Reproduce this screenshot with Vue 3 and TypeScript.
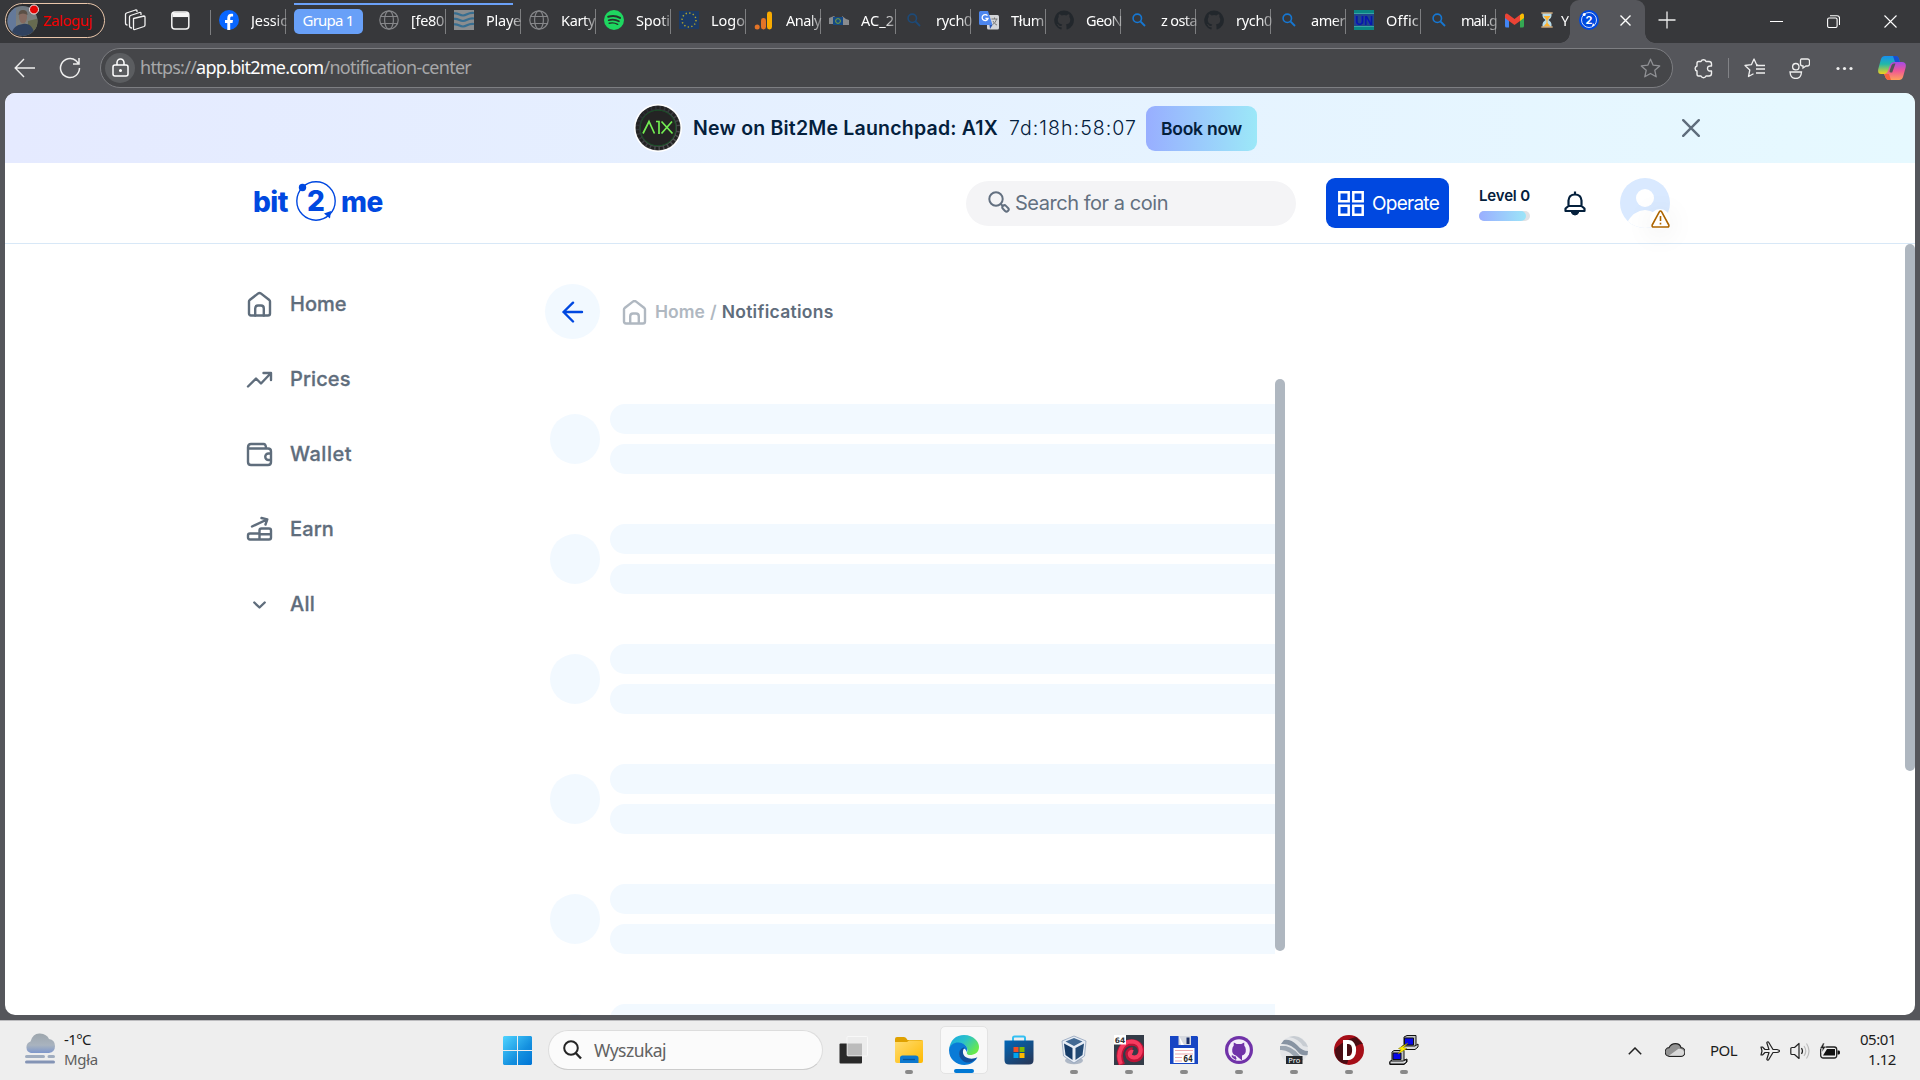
<script setup lang="ts">
interface Tab { icon: string; title: string; width: number; grouped?: boolean }
interface NavItem { icon: string; label: string; width: number }
interface TaskApp { icon: string; running: boolean; active?: boolean }

// Spreads the letters of an element so that its text fills the given width.
const vFit = {
  mounted(el: HTMLElement, binding: { value: number }) {
    const count = (el.textContent ?? '').trim().length
    const current = el.getBoundingClientRect().width
    if (count > 0) el.style.letterSpacing = `${(binding.value - current) / count}px`
  },
}

const search = (color: string) =>
  `<g fill="none" stroke="${color}" stroke-width="1.6"><circle cx="8.3" cy="8.3" r="4.2"/><path d="M11.4 11.4l4.6 4.6" stroke-width="1.9"/></g>`
const globe =
  '<g fill="none" stroke="#858689" stroke-width="1.2"><circle cx="10" cy="10" r="9.2"/><ellipse cx="10" cy="10" rx="4.4" ry="9.2"/><path d="M1.6 6.5h16.8M1.6 13.5h16.8"/></g>'
const octocat =
  'M10 0.4a9.8 9.8 0 0 0-3.1 19.1c.5.1.7-.2.7-.5v-1.8c-2.7.6-3.3-1.2-3.3-1.2-.4-1.1-1.1-1.4-1.1-1.4-.9-.6.1-.6.1-.6 1 .1 1.5 1 1.5 1 .9 1.5 2.3 1.1 2.9.8.1-.6.3-1.1.6-1.3-2.2-.3-4.500-1.100-4.500-4.900 0-1.100.4-2 1-2.600-.1-.3-.4-1.300.1-2.600 0 0 .8-.3 2.700 1a9.300 9.300 0 0 1 4.900 0c1.900-1.300 2.700-1 2.700-1 .5 1.300.2 2.300.1 2.600.6.7 1 1.600 1 2.600 0 3.800-2.300 4.600-4.500 4.900.4.3.7.9.7 1.800V19c0 .3.2.6.7.5A9.800 9.800 0 0 0 10 .4z'

const favicons: Record<string, string> = {
  facebook:
    '<circle cx="10" cy="10" r="10" fill="#0866ff"/><path d="M8.3 20v-6.900H6v-3h2.300V8.300c0-3.300 1.500-4.600 4.200-4.600.7 0 1.200.1 1.600.2v2.700h-1.200c-1.300 0-1.700.6-1.700 1.800v1.700h2.800l-.5 3h-2.300V20z" fill="#fff"/>',
  globe,
  waves:
    '<rect width="20" height="20" fill="#8a8d8f"/><g fill="none" stroke="#376e91" stroke-width="2.2"><path d="M0 3.500c4-1 5 2 9 2s5-3.500 11-2.500M0 9c4-1 5 2 9 2s5-3.500 11-2.500M0 14.500c4-1 5 2 9 2s5-3.500 11-2.500"/></g>',
  spotify:
    '<circle cx="10" cy="10" r="10" fill="#1ed760"/><g fill="none" stroke="#24352b" stroke-linecap="round"><path d="M4.200 6.800c4-1.200 8.500-.8 11.800 1.100" stroke-width="2"/><path d="M4.700 10.200c3.400-1 7.300-.6 10.200 1.100" stroke-width="1.700"/><path d="M5.200 13.300c3-.8 6-.4 8.500 1" stroke-width="1.4"/></g>',
  eu: '<rect y="1" width="20" height="18" fill="#1c3a63"/><circle cx="10" cy="10" r="7" fill="none" stroke="#b3a52a" stroke-width="1.5" stroke-dasharray="1.3 2.365"/>',
  analytics:
    '<rect x="13" y="1.500" width="5" height="18" rx="2.4" fill="#f9ab00"/><rect x="7" y="8" width="5" height="11.500" rx="2.4" fill="#e37427"/><circle cx="3.2" cy="17" r="2.5" fill="#e37427"/>',
  camera:
    '<path d="M0 8l5-2 2 2v6H0zM13 6l4 3 3 1v5h-7z" fill="#898b8e"/><rect x="4" y="7" width="10" height="8" fill="#164a85"/><circle cx="9" cy="11" r="2.4" fill="none" stroke="#7ba33c"/>',
  searchDim: search('#1d4a78'),
  search: search('#1677d2'),
  translate:
    '<rect x="8" y="5" width="12" height="14.500" rx="1.500" fill="#d3d5d8"/><path d="M1.500 1H9l4.500 14H1.500A1.500 1.500 0 0 1 0 13.500v-11A1.500 1.500 0 0 1 1.500 1z" fill="#4c86ee"/><path d="M10.500 15h3l-2.500 4z" fill="#2c56b0"/><path d="M8.500 5.700A3 3 0 1 0 9 8.500H6.400" fill="none" stroke="#fff" stroke-width="1.3"/><path d="M12.500 9h6M15.500 7.500V9M17.500 9c-.5 2.500-2 4.500-4 5.500M14 11c1 2 2.500 3.500 4 4" fill="none" stroke="#777" stroke-width="1"/>',
  github: `<path d="${octocat}" fill="#22272c"/>`,
  un: '<rect width="20" height="20" fill="#0a8583"/><rect y="3.500" width="20" height="13" fill="#21458a"/><path d="M0 3.500h20M0 16.500h20" stroke="#37a5a3"/><text x="10" y="15" text-anchor="middle" textLength="18" lengthAdjust="spacingAndGlyphs" font-family="Liberation Sans, sans-serif" font-size="13" font-weight="700" fill="#0715b0">UN</text>',
}

const firstTab: Tab = { icon: 'facebook', title: 'Jessic', width: 36 }
const groupTab: Tab = { icon: 'globe', title: '[fe80', width: 33 }
const tabs: Tab[] = [
  { icon: 'waves', title: 'Playe', width: 35, grouped: true },
  { icon: 'globe', title: 'Karty', width: 34 },
  { icon: 'spotify', title: 'Spoti', width: 34 },
  { icon: 'eu', title: 'Logo', width: 34 },
  { icon: 'analytics', title: 'Analy', width: 35 },
  { icon: 'camera', title: 'AC_2', width: 33 },
  { icon: 'searchDim', title: 'rych0', width: 36 },
  { icon: 'translate', title: 'Tłum', width: 33 },
  { icon: 'github', title: 'GeoN', width: 36 },
  { icon: 'search', title: 'z osta', width: 36 },
  { icon: 'github', title: 'rych0', width: 36 },
  { icon: 'search', title: 'amer', width: 34 },
  { icon: 'un', title: 'Offic', width: 33 },
  { icon: 'search', title: 'mail.g', width: 36 },
]

const navIcons: Record<string, string> = {
  home: '<path d="M2 9.500Q2 8.700 2.700 8L11.200 1.400Q12.500.5 13.800 1.400L22.300 8Q23 8.700 23 9.500V21.500Q23 23.500 21 23.500H4Q2 23.500 2 21.500Z"/><path d="M8.200 23.500V16.500Q8.200 13.500 11 13.500H14Q16.800 13.500 16.800 16.500V23.500"/>',
  prices: '<path d="M1 19.500L9 11.500L14 16.500L23.500 6.500M16.500 6H24V13"/>',
  wallet: '<path d="M1 5.500V20Q1 23 4 23H21Q24 23 24 20V9.500Q24 6.500 21 6.500H1.500M1 5.500Q1 2 4 2H16.500Q19 2 19 6.500M24 11.500H21.500A3 3 0 0 0 21.500 18H24"/>',
  earn: '<path d="M5 9.500L20 2.500M14.500 1L20.300 2.300L18.500 7.500M3 16.500H12.500V22.500H3Q1 22.500 1 20.500V18.500Q1 16.500 3 16.500ZM12.500 17V13.500Q12.500 11.500 14.500 11.500H22Q24 11.500 24 13.500V20.500Q24 22.500 22 22.500H12.500M12.500 17.200H24"/>',
  all: '<path d="M7.300 10.500L12.500 15.500L17.700 10.500"/>',
}
const nav: NavItem[] = [
  { icon: 'home', label: 'Home', width: 56.5 },
  { icon: 'prices', label: 'Prices', width: 60.5 },
  { icon: 'wallet', label: 'Wallet', width: 62 },
  { icon: 'earn', label: 'Earn', width: 44 },
  { icon: 'all', label: 'All', width: 25 },
]

const taskIcons: Record<string, string> = {
  taskView:
    '<rect x="0.500" y="8.500" width="22.500" height="20" rx="1" fill="#292929"/><rect x="8" y="1.500" width="20.500" height="19.500" rx="1" fill="#ececec" stroke="#fff" stroke-width=".6"/><path d="M8.500 8.500H23V20.500H8.500z" fill="#bcbcbc"/>',
  explorer:
    '<path d="M1 4Q1 2 3 2H10Q12 2 13.500 5H27Q29 5 29 7V14H1z" fill="#dfa100"/><path d="M1 7H13L15 5.500H29V26Q29 28 27 28H3Q1 28 1 26z" fill="url(#folder)"/><path d="M6 28V23Q6 20.500 8.500 20.500H21.500Q24.500 20.500 24.500 23V28z" fill="#0d79cf"/><path d="M9 24.500h12" stroke="#07549a" stroke-width="1.3"/>',
  edge:
    '<path d="M0 15C1 5 7 0 15 0C25 0 30 7 30 12C30 18 25 20 21 20C18 20 17 18 18.500 16C19 11 14 8 10 8C4 8 1 12 0 15z" fill="url(#edgeTop)"/><path d="M0 15C1 7 12 5 17 11C19 14 18.500 16 17.500 17C17 12 11 12 10.500 19C11 25 19 28 28 23C21 35 0 31 0 15z" fill="#0a7bd7"/><path d="M14.500 12.500C10 14 8 20 13 25C18 30 25 27 28.500 22C24 25 15 24 14 18C13.700 15.500 14.500 13.500 16 12.700z" fill="#104f9c"/>',
  store:
    '<path d="M9 8V3Q9 1.500 10.500 1.500H19.500Q21 1.500 21 3V8" fill="none" stroke="#33bff2" stroke-width="2"/><path d="M.5 5.500H29.500V25Q29.500 29.500 25 29.500H5Q.5 29.500.5 25Z" fill="url(#storeBag)"/><path fill="#f25022" d="M9.500 12h5v5h-5z"/><path fill="#7fba00" d="M15.500 12h5v5h-5z"/><path fill="#00a4ef" d="M9.500 18h5v5h-5z"/><path fill="#ffb900" d="M15.500 18h5v5h-5z"/>',
  vbox:
    '<ellipse cx="15" cy="25.500" rx="9" ry="3.800" fill="#aeb8c6"/><path d="M15 1L27 6L25.500 21L15 28L4.500 21L3 6Z" fill="#e7edf5" stroke="#8397b3" stroke-width=".7"/><path d="M15 3L23.500 6.500L15 11L6.500 6.500Z" fill="#426993"/><path d="M5 8.500L13.500 13V25L6.500 20Z" fill="#173c67"/><path d="M25 8.500L16.500 13V25L23.500 20Z" fill="#244b75"/>',
  swirl:
    '<rect width="30" height="30" fill="#343c48"/><path d="M8 30C2 17 9 7.500 17.500 7.500C30 7.500 30 24 20 24C13 24 13 15 18.500 15.500" fill="none" stroke="#bb1437" stroke-width="6.500"/><path d="M7 29C2 17 9 6.500 17.500 6.500C30 7 29 23 20 22.500C14 22 15 15.500 19 17" fill="none" stroke="#f63b5f" stroke-width="4"/><rect width="12" height="9.500" fill="#fff"/><text x="6" y="7.800" text-anchor="middle" font-family="DejaVu Sans, sans-serif" font-size="7.5" font-weight="700" fill="#333">64</text>',
  floppy:
    '<path d="M1 1H28L29 2V29H1z" fill="#1746c4"/><path d="M9.500 1H22V10H9.500z" fill="#d7dae0"/><path d="M17.500 2.500h3v6.500h-3z" fill="#1a2e66"/><path d="M10 1l5 9h-3z" fill="#fff"/><path d="M4.500 13H25.500V28H4.500z" fill="#fff"/><path d="M6 15.500h18M6 19h18M6 22.500h7M6 26h7" stroke="#ebaab0" stroke-width="1.2"/><text x="19" y="27" text-anchor="middle" font-family="DejaVu Sans Mono, monospace" font-size="8" font-weight="700" fill="#222">64</text>',
  github:
    '<circle cx="15" cy="15" r="14" fill="#7032a8"/><circle cx="15" cy="15" r="10.8" fill="#f3edfa"/><path d="M12 25.500V21.500Q9 21.500 7.500 18.500M12 20.500Q7.800 19.500 8.200 14.500Q8.400 12 9.700 10.800L9.800 7.500L12.700 9H17.300L20.200 7.500L20.300 10.800Q21.600 12 21.800 14.500Q22.200 19.500 18 20.500V25.500Z" fill="#7032a8"/><path d="M12.500 23.500Q9.800 24 8 20.500" fill="none" stroke="#7032a8" stroke-width="1.5"/>',
  earth:
    '<circle cx="15" cy="15" r="14" fill="#e3e5e8"/><path d="M2 9Q12 8 19 17Q22 21 28.500 20L29 16Q23 16 18 10Q12 4 5 5z" fill="#8793a2"/><path d="M1 15Q10 14 18 25L24 25Q16 13 7 11L1 11z" fill="#9ba5b1"/><path d="M10 2Q20 4 24 11L29 12Q25 2 15 1z" fill="#c7ccd2"/><rect x="7" y="21" width="16.500" height="8" fill="#25282c"/><text x="15.200" y="27.700" text-anchor="middle" font-family="Noto Sans, sans-serif" font-size="7.5" fill="#fff">Pro</text>',
  dred:
    '<circle cx="15" cy="15" r="15" fill="#a60e18"/><path d="M2 13Q12 4 22 2L29 9Q19 8 13 29Q1 28 1 15z" fill="#490d13"/><path d="M11 7V23H14.500C22 23 22 7 14.500 7Z" fill="none" stroke="#fff" stroke-width="4"/>',
  putty:
    '<g stroke="#111" stroke-width="1"><path d="M15 2L18 .5H27V11L25 14H13V12L15 10z" fill="#bfc1c4"/><path d="M15.500 3h9v7h-9z" fill="#0707e9"/><path d="M13 11H26L29 9V12L26 14.500H13z" fill="#d5d7d9"/><path d="M3 17L5 15.500H15V25L18 24V27L15 29.500H.8V27L3 25z" fill="#bfc1c4"/><path d="M4 18h8v6.500H4z" fill="#0707e9"/><path d="M1 26H14L17.500 24.500V27L15 29H1z" fill="#d5d7d9"/></g><path d="M19 8L14.500 12.500L18 13.500L9 19L12 14.500L9.500 13.500z" fill="#ffed00" stroke="#7c7400" stroke-width=".5"/>',
}
const taskApps: TaskApp[] = [
  { icon: 'taskView', running: false },
  { icon: 'explorer', running: true },
  { icon: 'edge', running: true, active: true },
  { icon: 'store', running: false },
  { icon: 'vbox', running: true },
  { icon: 'swirl', running: true },
  { icon: 'floppy', running: true },
  { icon: 'github', running: true },
  { icon: 'earth', running: true },
  { icon: 'dred', running: true },
  { icon: 'putty', running: true },
]
</script>

<template>
  <div class="desktop">
    <svg class="defs" width="0" height="0" aria-hidden="true">
      <defs>
        <linearGradient id="folder" x1="0" y1="0" x2="1" y2="1"><stop stop-color="#ffdd72" /><stop offset="1" stop-color="#ffb900" /></linearGradient>
        <linearGradient id="edgeTop" x1="0" y1="0" x2="1" y2=".6"><stop stop-color="#16a6e6" /><stop offset=".5" stop-color="#2bc2c9" /><stop offset="1" stop-color="#68e94c" /></linearGradient>
        <linearGradient id="storeBag" x1="0" y1="0" x2=".7" y2="1"><stop stop-color="#0067b8" /><stop offset="1" stop-color="#243a5e" /></linearGradient>
        <linearGradient id="win" x1="0" y1="0" x2="1" y2="1"><stop stop-color="#50d4ff" /><stop offset=".6" stop-color="#1490df" /><stop offset="1" stop-color="#0074d5" /></linearGradient>
        <linearGradient id="fog" x1="0" y1="0" x2="0" y2="1"><stop stop-color="#9da6ad" /><stop offset=".6" stop-color="#a9b3bf" /><stop offset="1" stop-color="#7e97cb" /></linearGradient>
        <linearGradient id="copA" x1="0" y1="0" x2="0" y2="1"><stop stop-color="#178ff0" /><stop offset=".45" stop-color="#22b8a8" /><stop offset="1" stop-color="#f5d01a" /></linearGradient>
        <linearGradient id="copB" x1="0" y1="0" x2="0" y2="1"><stop stop-color="#a34be8" /><stop offset=".5" stop-color="#ef5795" /><stop offset="1" stop-color="#ffa15b" /></linearGradient>
        <linearGradient id="sky" x1="0" y1="0" x2="0" y2="1"><stop stop-color="#6b7784" /><stop offset="1" stop-color="#8d8876" /></linearGradient>
        <linearGradient id="ring" x1="0" y1="0" x2="1" y2="1"><stop stop-color="#20232a" /><stop offset="1" stop-color="#5b5b5b" /></linearGradient>
      </defs>
    </svg>

    <div class="tabstrip">
      <div class="profile">
        <svg width="34" height="34" viewBox="0 0 34 34">
          <clipPath id="face"><circle cx="16.500" cy="18" r="15" /></clipPath>
          <g clip-path="url(#face)">
            <rect width="34" height="34" fill="url(#sky)" />
            <path d="M0 3h10v31H0z" fill="#64799a" /><path d="M22 18l12-3v19H22z" fill="#676b50" />
            <path d="M5 34c1-9 5-12 12-13s11 4 12 13z" fill="#30425f" />
            <ellipse cx="17" cy="14" rx="4" ry="6.500" fill="#856a60" /><path d="M12.500 12q0-5 4.500-5t4.500 5q-4.500-3-9 0z" fill="#5b5046" />
          </g>
          <circle cx="28" cy="6.500" r="4.500" fill="#e30404" stroke="#eee" stroke-width="1" />
        </svg>
        <span v-fit="49">Zaloguj</span>
      </div>
      <svg class="workspaces" width="22" height="22" viewBox="0 0 22 22" fill="none" stroke="#f2f2f2" stroke-width="1.3" stroke-linejoin="round">
        <path d="M9.500 9.500L20 7Q21 7 21 8V16Q21 17 20 17.500L11 20.500Q9.500 21 9.500 19.500ZM5.500 17V8Q5.500 7 6.500 6.500L15.500 3.500Q17 3 17 4.500V6M1.500 14V5.500Q1.500 4.500 2.500 4L11.500 1Q13 .7 13 2V3M1.500 14Q1.500 16 3.500 16M5.500 16.500Q5.500 19 8 19" />
      </svg>
      <svg class="tabactions" width="19" height="19" viewBox="0 0 19 19" fill="none" stroke="#f5f5f5"><rect x=".8" y="1" width="17" height="17" rx="3" stroke-width="1.5" /><path d="M1.500 3.800h16" stroke-width="4.5" /></svg>
      <i class="lead-sep"></i>
      <div class="tab first"><svg class="fav" viewBox="0 0 20 20" v-html="favicons[firstTab.icon]"></svg><div class="title"><span v-fit="firstTab.width">{{ firstTab.title }}</span></div></div>
      <div class="group">
        <div class="group-chip"><span v-fit="51">Grupa 1</span></div>
        <div class="tab ingroup"><svg class="fav" viewBox="0 0 20 20" v-html="favicons[groupTab.icon]"></svg><div class="title"><span v-fit="groupTab.width">{{ groupTab.title }}</span></div></div>
      </div>
      <div v-for="(tab, i) in tabs" :key="i" class="tab" :class="{ grouped: tab.grouped }">
        <svg class="fav" viewBox="0 0 20 20" v-html="favicons[tab.icon]"></svg><div class="title"><span v-fit="tab.width">{{ tab.title }}</span></div>
      </div>
      <div class="tab mail">
        <svg width="19" height="15" viewBox="0 0 19 15"><path d="M0 2v11q0 1.500 1.500 1.500H4V5z" fill="#4285f4" /><path d="M19 2v11q0 1.500-1.500 1.500H15V5z" fill="#34a853" /><path d="M15 2l1.500-1.200Q19 0 19 2.500V5l-4 3z" fill="#fbbc04" /><path d="M0 2.500Q0 0 2.500.8L9.500 6l5.500-4.200V8l-5.500 4L4 8 0 5z" fill="#ea4335" /></svg>
        <svg class="glass" width="12" height="16" viewBox="0 0 12 16"><path d="M1.500 1h9v3q0 2-3 4 3 2 3 4v3h-9v-3q0-2 3-4-3-2-3-4z" fill="#b8dbe9" /><path d="M2.500 4h7L6.500 8v3l3 3.500h-7l3-3.500V8z" fill="#ffb22c" /><path d="M.3 1h11.400M.3 15h11.400" stroke="#c8a376" stroke-width="1.700" /></svg>
        <div class="title"><span>Y</span></div>
      </div>
      <div class="tab-active">
        <svg width="20" height="20" viewBox="0 0 20 20"><circle cx="10" cy="10" r="10" fill="#0048e0" /><circle cx="10" cy="10" r="7.500" fill="none" stroke="#fff" stroke-width=".8" /><circle cx="5.200" cy="4.500" r="1.500" fill="#fff" /><path d="M14 13l1.800 2.500-2.800.8z" fill="#fff" /><text x="10" y="14" text-anchor="middle" class="fav-two">2</text></svg>
        <svg width="11" height="11" viewBox="0 0 11 11" stroke="#fff" stroke-width="1.4"><path d="M.5.5l10 10M10.500.5l-10 10" /></svg>
      </div>
      <svg class="plus" width="18" height="18" viewBox="0 0 18 18" stroke="#eee" stroke-width="1.3"><path d="M9 .5v17M.5 9h17" /></svg>
      <div class="wincontrols">
        <svg width="13" height="13" viewBox="0 0 13 13" stroke="#fff" stroke-width="1"><path d="M0 6.500h13" /></svg>
        <svg width="13" height="13" viewBox="0 0 13 13" fill="none" stroke="#fff" stroke-width="1.1"><rect x=".6" y="3" width="9.500" height="9.500" rx="1.500" /><path d="M3 .7h7Q12.500.7 12.500 3v7" /></svg>
        <svg width="13" height="13" viewBox="0 0 13 13" stroke="#fff" stroke-width="1.1"><path d="M.5.5l12 12M12.500.5l-12 12" /></svg>
      </div>
    </div>

    <div class="toolbar">
      <svg width="22" height="20" viewBox="0 0 22 20" fill="none" stroke="#eee" stroke-width="1.4"><path d="M21 10H1.500M10 1L1.200 10 10 19" /></svg>
      <svg class="reload" width="22" height="22" viewBox="0 0 22 22" fill="none" stroke="#eee" stroke-width="1.5"><path d="M20.500 11A9.500 9.500 0 1 1 17 3.700L19.500 6.500M20 1V7H14" /></svg>
      <div class="address">
        <div class="lock"><svg width="17" height="20" viewBox="0 0 17 20" fill="none" stroke="#fff" stroke-width="1.5"><rect x="1" y="7" width="15" height="11" rx="2" /><path d="M5 7V4.500a3.500 3.500 0 0 1 7 0V7" /><circle cx="8.500" cy="12.500" r=".8" fill="#fff" /></svg></div>
        <div v-fit="331" class="url">https://<b>app.bit2me.com</b>/notification-center</div>
        <svg class="star" width="21" height="21" viewBox="0 0 21 21" fill="none" stroke="#909195" stroke-width="1.3" stroke-linejoin="round"><path d="M10.500 1.200l2.700 6 6.500.7-4.900 4.400 1.400 6.500-5.700-3.300-5.700 3.300 1.400-6.500L1.300 7.900l6.500-.7z" /></svg>
      </div>
      <svg class="ext" width="21" height="21" viewBox="0 0 21 21" fill="none" stroke="#eee" stroke-width="1.4" stroke-linejoin="round"><path d="M5.500 3.500H8A2.700 2.700 0 0 1 13 3.500H16Q18.500 3.500 18.500 6V8Q14.500 7.500 14.500 10.500T18.500 13V15.500Q18.500 18 16 18H13A2.700 2.700 0 0 1 8 18H5.500Q4 18 4 16V13A2.600 2.600 0 0 1 4 8V5.500Q4 3.500 5.500 3.500Z" /></svg>
      <i class="bar-sep"></i>
      <svg width="21" height="20" viewBox="0 0 21 20" fill="none" stroke="#eee" stroke-width="1.3" stroke-linejoin="round"><path d="M14 7L12.500 6.500 10 1 7.400 6.700 1 7.500 5.800 12 4.500 18.500 9.500 15.800M12 7.500h9M12 11h9M12 15h9" /></svg>
      <svg class="share" width="21" height="21" viewBox="0 0 21 21" fill="none" stroke="#eee" stroke-width="1.3"><circle cx="6.800" cy="8.700" r="3.200" /><path d="M1 14H12.500Q12 20.500 6.800 20.500T1 14ZM12.500 1H18.500Q20.500 1 20.500 3V6Q20.500 8 18.500 8H17L14 10V8Q11.500 8 11.500 6V3Q11.500 1 12.500 1Z" /></svg>
      <svg class="more" width="17" height="5" viewBox="0 0 17 5" fill="#eee"><circle cx="2" cy="2.500" r="1.600" /><circle cx="8.500" cy="2.500" r="1.600" /><circle cx="15" cy="2.500" r="1.600" /></svg>
      <svg class="copilot" width="28" height="26" viewBox="0 0 28 26"><path d="M7 1H17Q20 1 21 4L22 7H17Q14 7 13 10L11 16Q10 19 7 19H3Q-1 19 .5 13L3 4Q4 1 7 1z" fill="url(#copA)" /><path d="M21 25H11Q8 25 7 21L6 19Q9 19 10 16L12 10Q13 7 17 7H24Q29 7 27.500 13L25 22Q24 25 21 25z" fill="url(#copB)" /><path d="M15 1h3q2.500 0 3 3l1 3h-5z" fill="#174fd0" /><path d="M6 19h5l2 6h-2q-3 0-4-4z" fill="#f5613e" /><path d="M16 8.500h1.500l-3.300 9H12.500q-1.500 0-.7-2.500l1.700-4.500q.8-2 2.500-2z" fill="#535459" /></svg>
    </div>

    <main class="page">
      <div class="banner">
        <svg class="coin" width="48" height="48" viewBox="0 0 48 48"><circle cx="24" cy="24" r="24" fill="#fff" /><circle cx="24" cy="24" r="22.500" fill="url(#ring)" /><circle cx="24" cy="24" r="20.500" fill="none" stroke="#222" stroke-width="3" stroke-dasharray="3 1.500" /><circle cx="24" cy="24" r="17.800" fill="#242424" stroke="#195125" stroke-width="1" /><path d="M9 29.500L15 17.500L20.500 29.500M22 17.500H25V30M27.500 17.500L38.500 29.500M38 17.500L27.500 29.500" fill="none" stroke="#73ed52" stroke-width="1.700" /></svg>
        <strong v-fit="305">New on Bit2Me Launchpad: A1X</strong>
        <span v-fit="128" class="countdown">7d:18h:58:07</span>
        <button class="book"><span v-fit="81">Book now</span></button>
        <svg class="dismiss" width="18" height="18" viewBox="0 0 18 18" stroke="#5f6d7c" stroke-width="2.4" stroke-linecap="round"><path d="M1.200 1.200l15.600 15.600M16.800 1.200L1.200 16.800" /></svg>
      </div>

      <header class="header">
        <div class="logo">
          <span v-fit="35">bit</span>
          <svg width="40" height="42" viewBox="0 0 40 42"><circle cx="20" cy="21" r="19.200" fill="none" stroke="#0048e0" stroke-width="1.4" /><circle cx="6.500" cy="7.500" r="3.700" fill="#0048e0" /><path d="M28 33.500L35 31L34 38.500z" fill="#0048e0" /><text x="20" y="31" text-anchor="middle">2</text></svg>
          <span v-fit="42">me</span>
        </div>
        <div class="search">
          <svg width="22" height="22" viewBox="0 0 22 22" fill="none" stroke="#637080" stroke-width="2"><circle cx="8" cy="8" r="6.700" /><path d="M12.800 13l2 2" /><rect x="14" y="15.300" width="7" height="4.200" rx="2" transform="rotate(45 17.500 17.400)" /></svg>
          <span v-fit="153">Search for a coin</span>
        </div>
        <button class="operate">
          <svg width="26" height="25" viewBox="0 0 26 25" fill="none" stroke="#fff" stroke-width="2.5"><path d="M1.300 1.300h9.400v8.900H1.300zM15.300 1.300h9.400v8.900h-9.400zM1.300 14.800h9.400v8.900H1.300zM15.300 14.800h9.400v8.900h-9.400z" /></svg>
          <span v-fit="67">Operate</span>
        </button>
        <div class="level"><span v-fit="51">Level 0</span><div class="meter"><i></i></div></div>
        <svg class="bell" width="22" height="26" viewBox="0 0 22 26" fill="none" stroke="#04203c" stroke-width="2.2" stroke-linejoin="round"><path d="M11 .5V3M4.500 15V9.500Q5 3.500 11 3.500T17.500 9.500V15L20.500 17.500V20H1.500V17.500ZM4.500 15H17.500" /><path d="M7 20.500Q8 24 11 24T15 20.500z" fill="#04203c" stroke-width="1" /></svg>
        <div class="avatar">
          <svg width="50" height="50" viewBox="0 0 50 50"><clipPath id="av"><circle cx="25" cy="25" r="25" /></clipPath><g clip-path="url(#av)"><rect width="50" height="50" fill="#d9e9ff" /><circle cx="25" cy="20" r="9" fill="#fff" /><path d="M6 46Q14 32 25 32T45 46L42 50H8z" fill="#fff" /></g></svg>
          <div class="warn"><svg width="19" height="18" viewBox="0 0 19 18" fill="none" stroke="#ad6500" stroke-width="1.600" stroke-linejoin="round"><path d="M9.500 1Q10.200 1 10.700 1.800L17.800 15Q18.300 17 16.500 17H2.500Q.7 17 1.200 15L8.300 1.800Q8.800 1 9.500 1ZM9.500 6v5M9.500 12.800v1.700" /></svg></div>
        </div>
      </header>

      <div class="body">
        <nav class="sidebar">
          <a v-for="item in nav" :key="item.label"><svg width="26" height="25" viewBox="0 0 26 25" v-html="navIcons[item.icon]"></svg><span v-fit="item.width">{{ item.label }}</span></a>
        </nav>
        <section class="content">
          <div class="crumbs">
            <div class="back"><svg width="22" height="22" viewBox="0 0 22 22" fill="none" stroke="#0048e0" stroke-width="2.4" stroke-linecap="round" stroke-linejoin="round"><path d="M20 11H1.500M11 1.700L1.500 11l9.500 9.500" /></svg></div>
            <svg class="crumb-home" width="25" height="25" viewBox="0 0 25 25" v-html="navIcons.home"></svg>
            <span v-fit="50" class="muted">Home</span><span class="muted slash">/</span><span v-fit="112" class="here">Notifications</span>
          </div>
          <div class="list-wrap">
            <div class="list">
              <div v-for="n in 6" :key="n" class="row"><i class="dot"></i><div class="bars"><i></i><i></i></div></div>
            </div>
            <div class="list-scroll"></div>
          </div>
        </section>
        <div class="page-scroll"></div>
      </div>
    </main>

    <footer class="taskbar">
      <div class="weather">
        <svg width="30" height="31" viewBox="0 0 30 31"><path d="M6 20A6 6 0 0 1 5.500 8.500Q8 0 15 .5T24 6Q30 7 30 13T24 20z" fill="url(#fog)" /><path d="M1.500 23.500H18.500M24 23.500H28.500" stroke="#a0adc0" stroke-width="3" stroke-linecap="round" /><path d="M1.500 29H28.500" stroke="#8494b5" stroke-width="3" stroke-linecap="round" /></svg>
        <div><p v-fit="27">-1°C</p><p v-fit="34" class="sub">Mgła</p></div>
      </div>
      <svg class="start" width="29" height="29" viewBox="0 0 29 29" fill="url(#win)"><path d="M1 0H14V14H0V1zM15 0H28L29 1V14H15zM0 15H14V29H1L0 28zM15 15H29V28L28 29H15z" /></svg>
      <div class="find">
        <svg width="19" height="20" viewBox="0 0 19 20" fill="none" stroke="#242424" stroke-width="2"><circle cx="8" cy="8" r="6.800" /><path d="M12.700 13l5.300 5.500" stroke-width="2.4" /></svg>
        <span v-fit="72">Wyszukaj</span>
      </div>
      <div class="apps">
        <div v-for="app in taskApps" :key="app.icon" class="app" :class="{ active: app.active, running: app.running }"><svg width="30" height="30" viewBox="0 0 30 30" v-html="taskIcons[app.icon]"></svg></div>
      </div>
      <div class="tray">
        <svg width="14" height="8" viewBox="0 0 14 8" fill="none" stroke="#222" stroke-width="1.5"><path d="M.8 7.200L7 1l6.200 6.200" /></svg>
        <svg class="onedrive" width="20" height="14" viewBox="0 0 20 14"><path d="M5 13.300A4.300 4.300 0 0 1 4 4.700Q6 .7 10.500.7T16 4.700A4.300 4.300 0 0 1 15.500 13.300z" fill="#929292" stroke="#222" stroke-width="1.2" /><path d="M3.800 12.700L13.500 5.800Q19 6 19 9.500T15.500 12.700z" fill="#d9d9d9" /></svg>
        <span v-fit="27" class="lang">POL</span>
        <svg class="plane" width="20" height="20" viewBox="0 0 20 20" fill="none" stroke="#222" stroke-width="1.2" stroke-linejoin="round"><path d="M1 6H2.500L5 8.500H9L6.800 1.800Q7 .7 8.500 1L13 8.500H17Q19.500 9 19.500 10T17 11.500H13L8.500 19Q7 19.300 6.800 18.200L9 11.500H5L2.500 14H1L2 10z" /></svg>
        <svg class="sound" width="20" height="18" viewBox="0 0 20 18" fill="none" stroke="#222" stroke-width="1.2" stroke-linejoin="round"><path d="M.8 6.500Q.8 5.500 2 5.500H4.500L9 1.500V16.500L4.500 12.500H2Q.8 12.500.8 11.500z" /><path d="M11.500 6q2 3 0 6" /><path d="M14 4q3.500 5 0 10M16.500 1.500q5 7.500 0 15" stroke="#bcbcbc" /></svg>
        <svg class="battery" width="20" height="16" viewBox="0 0 20 16"><rect x=".7" y="4" width="16" height="11" rx="2.500" fill="none" stroke="#222" stroke-width="1.3" /><path d="M3 12.500L7 6H15V12.500zM17.500 7.500H19Q20 7.500 20 9.500T19 11.500H17.500z" fill="#111" /><path d="M3 0L0 5.500H2.500L1.500 9.500L6 3.500H3.500L4.500 0z" fill="#222" stroke="#eee" stroke-width=".5" /></svg>
        <div class="clock"><p v-fit="36">05:01</p><p v-fit="28">1.12</p></div>
      </div>
    </footer>
  </div>
</template>

<style>
body { margin: 0; overflow: hidden; background: #55565b; }
</style>

<style scoped>
* { box-sizing: border-box; }
.desktop { width: 1920px; height: 1080px; display: flex; flex-direction: column; background: #55565b; font-family: "Noto Sans", "Open Sans", sans-serif; overflow: hidden; }
.defs { position: absolute; }
svg { display: block; flex: none; }
span, p, strong { display: inline-block; white-space: nowrap; flex: none; }
p { margin: 0; }
i { display: block; flex: none; }
button { border: 0; padding: 0; }

.tabstrip { height: 43px; flex: none; display: flex; align-items: center; background: #37383b; color: #fff; font-size: 15px; padding: 0 23px 3px 5px; }
.profile { width: 100px; height: 35px; display: flex; align-items: center; border: 1px solid #e9c6aa; border-radius: 18px; color: #f20000; background: #2c2d30; flex: none; }
.profile svg { margin-right: 3px; }
.workspaces { margin-left: 19px; }
.tabactions { margin-left: 25px; }
.lead-sep { width: 1px; height: 25px; background: #7d7e80; margin: 4px 0 0 20px; }
.tab { width: 75px; height: 40px; display: flex; align-items: center; padding-left: 8px; flex: none; background: linear-gradient(#7d7e80, #7d7e80) right 9px / 1px 25px no-repeat; }
.fav { width: 20px; height: 20px; margin-right: 12px; }
.title { width: 36px; margin-right: -1px; padding-bottom: 1px; line-height: 24px; font-size: 14.5px; -webkit-mask-image: linear-gradient(90deg, #000 65%, rgba(0,0,0,.25)); mask-image: linear-gradient(90deg, #000 65%, rgba(0,0,0,.25)); }
.group { width: 160px; height: 40px; display: flex; align-items: center; background: linear-gradient(#6ba1f8, #6ba1f8) 8px 3px / 152px 2px no-repeat; flex: none; }
.group-chip { margin: 2px 0 0 8px; width: 69px; height: 25px; border-radius: 5px; background: #68a0f8; display: flex; align-items: center; justify-content: center; line-height: 20px; padding: 0 1px 2px 0; }
.tab.ingroup { width: 83px; padding-left: 16px; }
.tab.grouped { background: linear-gradient(#7d7e80, #7d7e80) right 9px / 1px 25px no-repeat, linear-gradient(#6ba1f8, #6ba1f8) 0 3px / 67px 2px no-repeat; }
.tab.mail { width: 74px; padding-left: 9px; background: none; }
.glass { margin: 0 8px 0 17px; }
.mail .title { width: 10px; }
.tab-active { height: 43px; width: 75px; margin-bottom: -3px; padding: 0 14px 3px 9px; background: #55565b; border-radius: 9px 9px 0 0; display: flex; align-items: center; justify-content: space-between; flex: none; position: relative; }
.tab-active::before, .tab-active::after { content: ""; position: absolute; bottom: 0; width: 10px; height: 10px; }
.tab-active::before { left: -10px; background: radial-gradient(circle at 0 0, transparent 9.5px, #55565b 10px); }
.tab-active::after { right: -10px; background: radial-gradient(circle at 100% 0, transparent 9.5px, #55565b 10px); }
.fav-two { font: 700 11px Inter, sans-serif; fill: #fff; }
.plus { margin-left: 13px; }
.wincontrols { margin: 3px 0 0 auto; display: flex; gap: 44px; }

.toolbar { height: 50px; flex: none; display: flex; align-items: center; padding-left: 14px; }
.reload { margin-left: 23px; }
.address { width: 1573px; height: 40px; margin-left: 19px; border: 1px solid #7d7e82; border-radius: 20px; background: #454649; display: flex; align-items: center; padding: 0 11px 0 4px; flex: none; }
.lock { width: 30px; height: 30px; border-radius: 50%; background: #5b5d60; display: flex; align-items: center; justify-content: center; }
.url { margin-left: 5px; padding-bottom: 2px; font-size: 18px; color: #a7a8aa; white-space: nowrap; flex: none; }
.url b { font-weight: 400; color: #fff; }
.star { margin-left: auto; }
.ext { margin-left: 20px; }
.bar-sep { width: 1px; height: 20px; background: #828387; margin: 0 15px 0 14px; }
.share { margin-left: 24px; }
.more { margin-left: 26px; }
.copilot { margin-left: 25px; }

.page { width: 1910px; height: 922px; margin-left: 5px; background: #fff; border-radius: 10px; overflow: hidden; font-family: Inter, "Noto Sans", sans-serif; flex: none; display: flex; flex-direction: column; }
.banner { height: 70px; flex: none; background: linear-gradient(90deg, #e5eaff, #e6f9ff); display: flex; align-items: center; padding-left: 629px; color: #04203c; font-size: 19.5px; }
.banner strong { margin-left: 11px; font-weight: 600; }
.countdown { margin-left: 11px; font-weight: 300; }
.book { width: 111px; height: 45px; margin-left: 9px; border-radius: 9px; background: linear-gradient(90deg, #98aeff, #9ce8f8); font: 600 17.5px Inter, sans-serif; color: #04203c; }
.dismiss { margin-left: 425px; }
.header { height: 81px; flex: none; display: flex; align-items: center; border-bottom: 1px solid #d8e8f7; padding-left: 248px; color: #04203c; }
.logo { display: flex; align-items: center; color: #0048e0; font-size: 28px; font-weight: 800; width: 713px; }
.logo > span { padding-bottom: 2px; }
.logo > svg { margin: -4px 5px 0 8px; }
.logo text { font: 800 28px Inter, sans-serif; fill: #0048e0; }
.search { width: 330px; height: 45px; border-radius: 23px; background: #f4f4f6; display: flex; align-items: center; padding-left: 22px; gap: 5px; color: #637080; font-size: 20px; }
.search svg { margin-top: -2px; }
.operate { width: 123px; height: 50px; margin-left: 30px; border-radius: 9px; background: #0048e0; color: #fff; display: flex; align-items: center; padding-left: 12px; gap: 8px; font: 400 19px Inter, sans-serif; }
.level { margin-left: 30px; width: 51px; font-size: 15px; font-weight: 600; line-height: 20px; }
.meter { height: 10px; margin-top: 5px; border-radius: 5px; background: #e0e2e5; }
.meter i { width: 47px; height: 10px; border-radius: 5px; background: linear-gradient(90deg, #9aaeff, #9ce5f8); }
.bell { margin: 2px 0 0 34px; }
.avatar { margin-left: 34px; position: relative; }
.warn { position: absolute; right: 0; bottom: -1px; width: 20px; height: 20px; border-radius: 50%; background: #fff; box-shadow: 0 5px 28px rgba(0,0,0,.1); }
.warn svg { margin: 1px 0 0 1px; }

.body { display: flex; flex: 1; min-height: 0; }
.sidebar { width: 540px; padding: 22px 0 0 242px; color: #5f6d7c; }
.sidebar a { display: flex; height: 75px; align-items: center; gap: 17px; font-size: 20px; font-weight: 500; -webkit-text-stroke: .3px; }
.sidebar svg { fill: none; stroke: #5f6d7c; stroke-width: 2.4; stroke-linejoin: round; stroke-linecap: round; overflow: visible; margin-top: 1px; }
.content { width: 740px; padding-top: 40px; }
.crumbs { display: flex; align-items: center; height: 55px; font-size: 17.5px; font-weight: 600; }
.back { width: 55px; height: 55px; border-radius: 50%; background: #f2f9ff; display: flex; justify-content: center; align-items: center; }
.back svg { margin-top: 1px; }
.crumb-home { margin: 2px 8px 0 22px; fill: none; stroke: #b0b8c1; stroke-width: 2.4; }
.muted { color: #b0b8c1; }
.slash { margin: 0 5px 0 5px; }
.here { color: #5f6d7c; }
.list-wrap { display: flex; margin-top: 40px; height: 640px; }
.list { width: 730px; padding: 25px 0 0 5px; }
.row { display: flex; height: 120px; }
.dot { width: 50px; height: 50px; border-radius: 50%; background: #f2f9ff; margin: 10px 10px 0 0; }
.bars { flex: 1; display: flex; flex-direction: column; gap: 10px; }
.bars i { height: 30px; background: #f2f9ff; border-radius: 15px 0 0 15px; }
.list-scroll { width: 10px; height: 572px; border-radius: 5px; background: #afb7c0; }
.page-scroll { width: 10px; height: 527px; border-radius: 5px; background: #afb7c0; margin-left: auto; }

.taskbar { height: 60px; margin-top: 5px; background: #eee; border-top: 1px solid #bcbcbf; display: flex; align-items: center; color: #1c1c1c; font-size: 15px; flex: none; padding: 0 24px 1px 0; }
.weather { width: 478px; padding-left: 25px; margin-right: 25px; display: flex; align-items: center; gap: 9px; line-height: 20px; margin-top: -3px; }
.weather > div, .clock { display: flex; flex-direction: column; align-items: flex-start; }
.sub { color: #5e5e5e; }
.find { width: 275px; height: 40px; border-radius: 20px; background: #fbfbfb; border: 1px solid #ddd; border-bottom-color: #ccc; margin-left: 16px; padding-left: 14px; display: flex; align-items: center; gap: 12px; font-size: 17.5px; color: #626262; }
.apps { display: flex; gap: 7px; margin-left: 7px; }
.app { width: 48px; height: 48px; display: flex; justify-content: center; align-items: center; position: relative; border-radius: 5px; }
.app.active { background: #f8f8f8; border: 1px solid #e3e3e3; }
.app.running::after { content: ""; position: absolute; bottom: 0; width: 8px; height: 4px; border-radius: 2px; background: #898989; }
.app.active::after { width: 20px; background: #0078d4; }
.tray { margin-left: auto; display: flex; align-items: center; line-height: 20px; }
.tray > svg { margin-top: 1px; }
.tray .onedrive { margin: 0 0 0 23px; }
.lang { margin-left: 25px; }
.plane { margin-left: 23px; }
.sound { margin-left: 10px; }
.battery { margin-left: 10px; }
.clock { margin: -3px 0 0 20px; align-items: flex-end; }
</style>
